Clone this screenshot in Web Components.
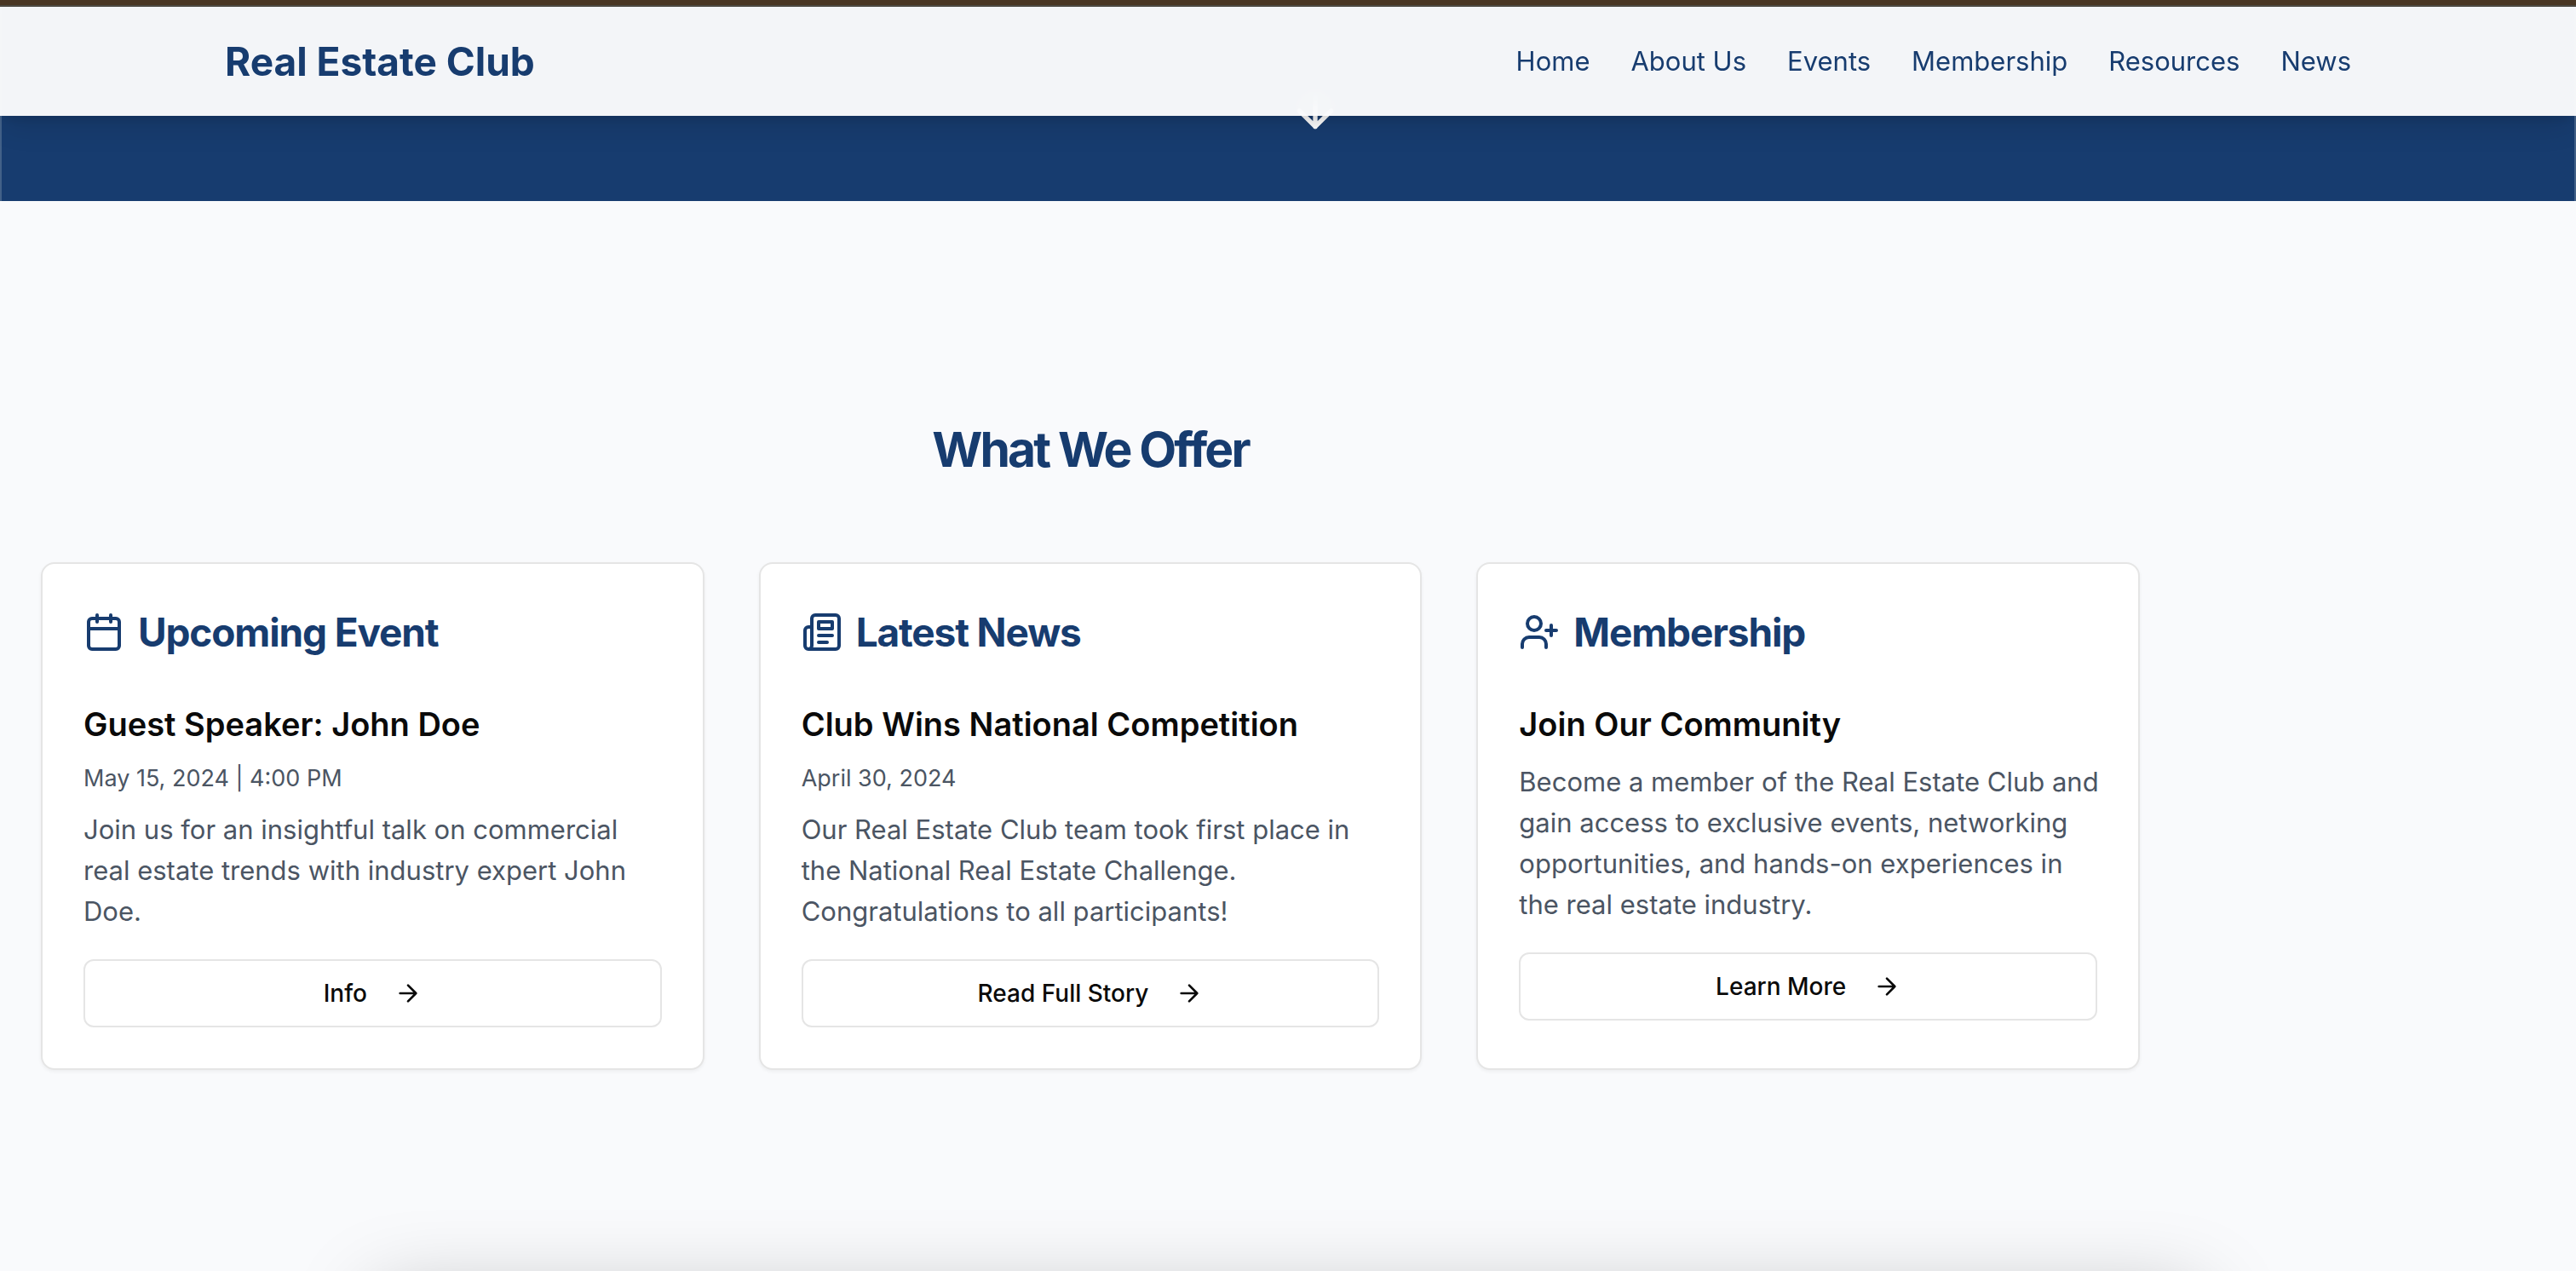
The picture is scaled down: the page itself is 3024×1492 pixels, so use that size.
<!DOCTYPE html>
<html lang="en">
<head>
<meta charset="utf-8">
<title>Real Estate Club</title>
<style>
  html { background: #f9fafc; }
  body { margin: 0; font-family: Inter, "Liberation Sans", sans-serif; color: #0a0a0a; --navy: #173c6f; }
</style>
</head>
<body>
<club-page></club-page>

<template id="club-page">
  <style>
    :host { display: flow-root; }
    .rule { position: relative; z-index: 3; height: 6px; background: #493624; border-bottom: 2px solid #4d4a43; }
    hero-band { margin-top: -136px; }
  </style>
  <div class="rule"></div>
  <site-header></site-header>
  <hero-band></hero-band>
  <offer-section heading="What We Offer">
    <offer-card icon="calendar" heading="Upcoming Event" action="Info">
      <span slot="title">Guest Speaker: John Doe</span>
      <span slot="date">May 15, 2024 | 4:00 PM</span>
      Join us for an insightful talk on commercial real estate trends with industry expert John Doe.
    </offer-card>
    <offer-card icon="newspaper" heading="Latest News" action="Read Full Story">
      <span slot="title">Club Wins National Competition</span>
      <span slot="date">April 30, 2024</span>
      Our Real Estate Club team took first place in the National Real Estate Challenge. Congratulations to all participants!
    </offer-card>
    <offer-card icon="user-plus" heading="Membership" action="Learn More">
      <span slot="title">Join Our Community</span>
      Become a member of the Real Estate Club and gain access to exclusive events, networking opportunities, and hands-on experiences in the real estate industry.
    </offer-card>
  </offer-section>
  <bottom-glow></bottom-glow>
</template>

<template id="site-header">
  <style>
    :host {
      display: block; position: relative; z-index: 2;
      background: rgba(255, 255, 255, .95);
      backdrop-filter: blur(16px);
      box-shadow: 0 20px 30px -6px rgba(0, 0, 0, .1), 0 8px 12px -4px rgba(0, 0, 0, .1);
    }
    .bar {
      box-sizing: border-box; max-width: 2560px; height: 128px; margin: 0 auto; padding: 0 32px;
      display: flex; align-items: center; justify-content: space-between;
    }
    a { color: var(--navy); text-decoration: none; }
    .brand { font-size: 46px; line-height: 64px; font-weight: 700; }
    nav { display: flex; gap: 48px; font-size: 31px; line-height: 48px; }
  </style>
  <div class="bar">
    <a class="brand" href="#home">Real Estate Club</a>
    <nav aria-label="Main">
      <a href="#home">Home</a><a href="#about">About Us</a><a href="#events">Events</a><a href="#membership">Membership</a><a href="#resources">Resources</a><a href="#news">News</a>
    </nav>
  </div>
</template>

<template id="hero-band">
  <style>
    :host {
      display: flex; justify-content: center; align-items: flex-end; height: 236px;
      box-sizing: border-box; padding: 0 0 74px 64px;
      background: var(--navy);
      border-inline: 2px solid #426188;
    }
    line-icon { color: #fff; --size: 64px; }
  </style>
  <line-icon name="arrow-down"></line-icon>
</template>

<template id="offer-section">
  <style>
    :host { display: block; box-sizing: border-box; max-width: 2560px; padding: 256px 48px 128px; }
    h2 {
      margin: 0 0 96px; text-align: center; color: var(--navy);
      font-size: 57px; line-height: 72px; font-weight: 700; letter-spacing: -.05em;
    }
    .grid { display: grid; grid-template-columns: repeat(3, minmax(0, 1fr)); gap: 64px; }
  </style>
  <h2></h2>
  <div class="grid"><slot></slot></div>
</template>

<template id="offer-card">
  <style>
    :host {
      display: block; box-sizing: border-box; padding: 48px;
      background: #fff; border: 2px solid #e5e5e5; border-radius: 16px;
      box-shadow: 0 2px 4px rgba(0, 0, 0, .05);
    }
    header { display: flex; align-items: center; gap: 16px; color: var(--navy); margin-bottom: 48px; }
    line-icon { --size: 48px; }
    h3 { margin: 0; font-size: 46px; line-height: 64px; font-weight: 700; letter-spacing: -.025em; }
    h4 { margin: 0 0 16px; font-size: 38px; line-height: 56px; font-weight: 600; }
    .date { margin: 0 0 16px; font-size: 27px; line-height: 40px; color: #4b5563; }
    .text { margin: 0 -8px 32px 0; font-size: 31px; line-height: 48px; color: #4b5563; }
    button {
      display: flex; align-items: center; justify-content: center; gap: 32px;
      width: 100%; height: 80px; box-sizing: border-box; margin: 0; padding: 0 32px;
      background: #fff; border: 2px solid #e5e5e5; border-radius: 12px;
      font: 500 28px/40px Inter, "Liberation Sans", sans-serif; color: #0a0a0a; cursor: pointer;
    }
    button line-icon { --size: 32px; }
  </style>
  <header><line-icon></line-icon><h3></h3></header>
  <h4><slot name="title"></slot></h4>
  <p class="date"><slot name="date"></slot></p>
  <p class="text"><slot></slot></p>
  <button type="button"><span></span><line-icon name="arrow-right"></line-icon></button>
</template>

<template id="bottom-glow">
  <style>
    :host {
      display: block; position: fixed; bottom: -228px; left: 440px; right: 440px; height: 200px;
      border-radius: 16px; box-shadow: 0 0 96px rgba(0, 0, 0, .25); pointer-events: none;
    }
  </style>
</template>

<script>
  const ICONS = {
    'calendar': '<path d="M8 2v4M16 2v4M3 10h18"/><rect x="3" y="4" width="18" height="18" rx="2"/>',
    'newspaper': '<path d="M4 22h16a2 2 0 0 0 2-2V4a2 2 0 0 0-2-2H8a2 2 0 0 0-2 2v16a2 2 0 0 1-2 2Zm0 0a2 2 0 0 1-2-2v-9c0-1.1.9-2 2-2h2"/><path d="M18 14h-8M15 18h-5M10 6h8v4h-8V6Z"/>',
    'user-plus': '<path d="M16 21v-2a4 4 0 0 0-4-4H6a4 4 0 0 0-4 4v2"/><circle cx="9" cy="7" r="4"/><path d="M19 8v6M22 11h-6"/>',
    'arrow-right': '<path d="M5 12h14M12 5l7 7-7 7"/>',
    'arrow-down': '<path d="M12 5v14M19 12l-7 7-7-7"/>'
  };

  class TemplateElement extends HTMLElement {
    connectedCallback() {
      if (this.shadowRoot) return;
      const part = document.getElementById(this.localName).content.cloneNode(true);
      this.fill(part);
      this.attachShadow({ mode: 'open' }).append(part);
    }
    fill() {}
  }

  customElements.define('line-icon', class extends HTMLElement {
    connectedCallback() {
      if (this.shadowRoot) return;
      this.attachShadow({ mode: 'open' }).innerHTML =
        `<style>:host{display:block;flex:none;width:var(--size);height:var(--size)}svg{display:block;width:100%;height:100%}</style>
         <svg viewBox="0 0 24 24" fill="none" stroke="currentColor" stroke-width="2" stroke-linecap="round" stroke-linejoin="round" aria-hidden="true">${ICONS[this.getAttribute('name')]}</svg>`;
    }
  });

  customElements.define('offer-card', class extends TemplateElement {
    fill(part) {
      part.querySelector('header line-icon').setAttribute('name', this.getAttribute('icon'));
      part.querySelector('h3').textContent = this.getAttribute('heading');
      part.querySelector('button span').textContent = this.getAttribute('action');
      if (!this.querySelector('[slot="date"]')) part.querySelector('.date').remove();
    }
  });
  customElements.define('offer-section', class extends TemplateElement {
    fill(part) { part.querySelector('h2').textContent = this.getAttribute('heading'); }
  });
  for (const name of ['site-header', 'hero-band', 'bottom-glow', 'club-page']) {
    customElements.define(name, class extends TemplateElement {});
  }
</script>
</body>
</html>
